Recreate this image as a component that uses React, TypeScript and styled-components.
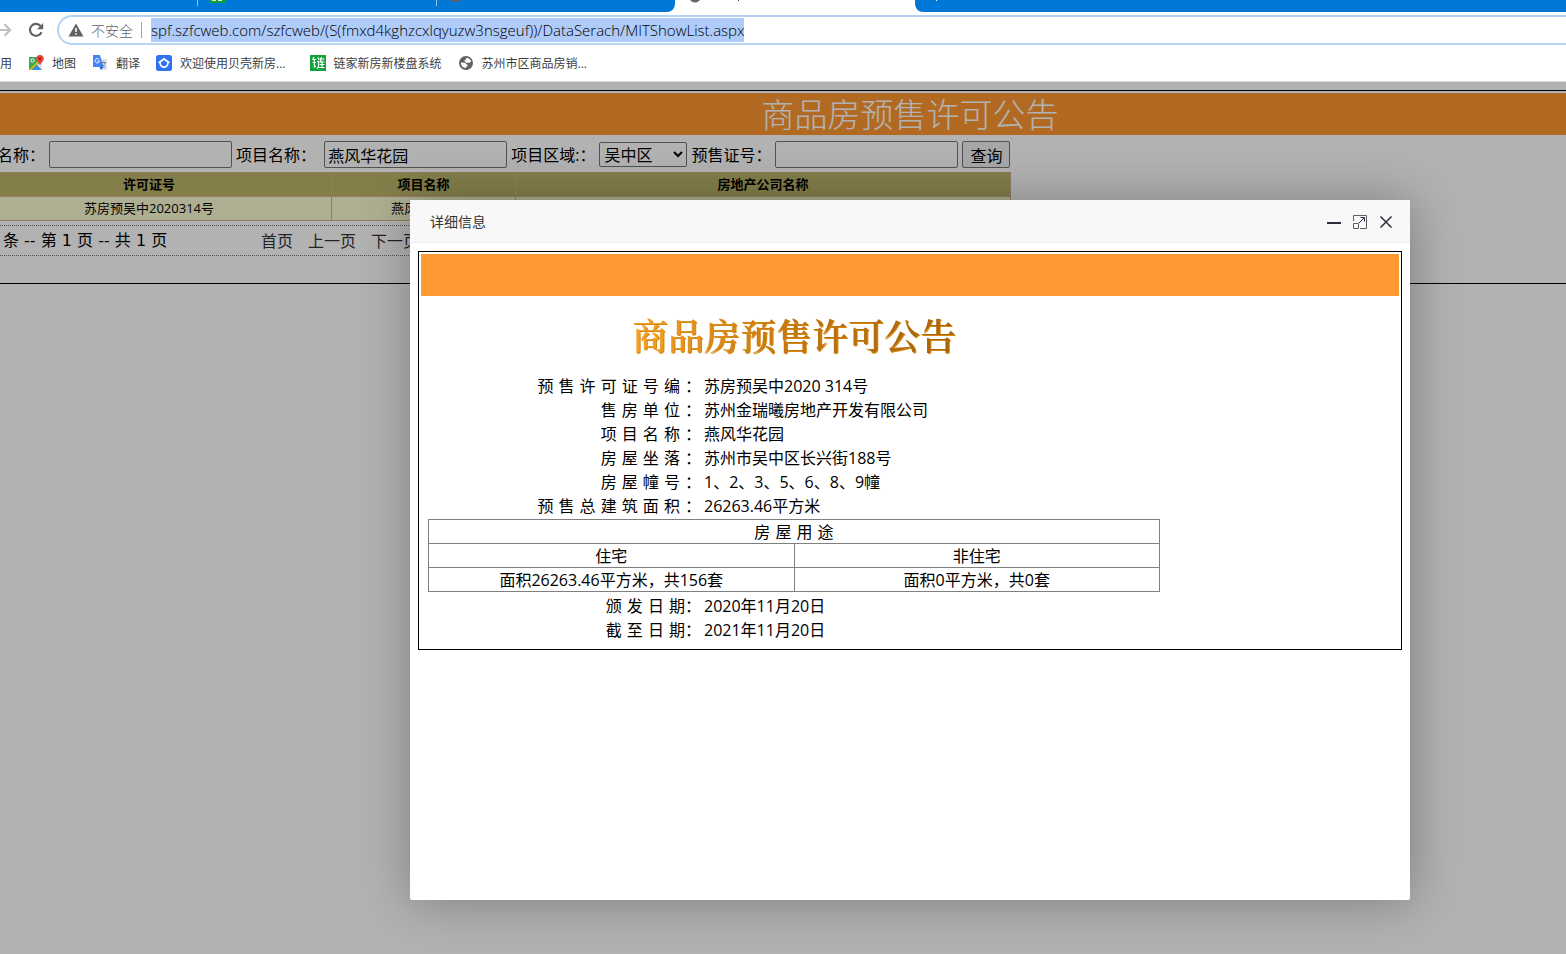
import React from "react";
import styled, { createGlobalStyle } from "styled-components";

const ui = `"Open Sans", "Noto Sans CJK SC", sans-serif`;
const spaced = `"DejaVu Sans", "Noto Sans CJK SC", sans-serif`;

const Global = createGlobalStyle`
  * { box-sizing: border-box; }
  body { margin: 0; background: #fff; font-family: ${ui}; font-size: 16px; font-weight: 400; color: #000; }
`;

const Screen = styled.div`
  position: relative;
  display: flex;
  flex-direction: column;
  min-height: 100vh;
  overflow: hidden;
`;

/* ---------- browser chrome ---------- */

const TabStrip = styled.div`
  display: flex;
  height: 12px;
  overflow: hidden;
`;
const IdleTabs = styled.div`
  display: flex;
  width: 675px;
  background: #0078d7;
  border-bottom-right-radius: 8px;
`;
const IdleTab = styled.div<{ $w: number }>`
  width: ${(p) => p.$w}px;
  height: 6px;
  padding-left: 11px;
  border-right: 1px solid #8cc4f2;
  &:last-child { border-right: 0; }
`;
const ActiveTab = styled.div`
  width: 240px;
  padding-left: 14px;
`;
const StripRest = styled.div`
  flex: 1;
  padding-left: 18px;
  background: #0078d7;
  border-bottom-left-radius: 8px;
`;
const Svg = styled.svg`
  display: block;
  flex: none;
`;

const Toolbar = styled.div`
  display: flex;
  align-items: center;
  height: 36px;
  gap: 12px;
`;
const IconButton = styled.button`
  display: flex;
  padding: 0;
  border: 0;
  background: none;
`;
const Omnibox = styled.div`
  display: flex;
  flex: 1;
  align-items: center;
  height: 30px;
  margin-right: -20px;
  padding-left: 9px;
  border: 2px solid #b3d4f5;
  border-radius: 15px;
`;
const Insecure = styled.span`
  margin: 0 8px 0 7px;
  font-size: 14px;
  font-weight: 300;
  color: #5f6368;
`;
const Divider = styled.span`
  width: 1px;
  height: 16px;
  margin-right: 9px;
  background: #9aa0a6;
`;
const Url = styled.input`
  field-sizing: content;
  height: 24px;
  padding: 0;
  border: 0;
  outline: 0;
  background: #aecbfa;
  font: 300 15px ${ui};
  color: #000;
`;
const Bookmarks = styled.nav`
  display: flex;
  align-items: center;
  height: 34px;
  padding-bottom: 4px;
  gap: 16px;
  border-bottom: 1px solid #dadce0;
`;
const Bookmark = styled.a<{ $gap?: number }>`
  display: flex;
  align-items: center;
  gap: 8px;
  margin-right: ${(p) => p.$gap ?? 0}px;
  font-size: 12px;
  color: #3c4043;
  text-decoration: none;
  white-space: nowrap;
`;

/* ---------- announcement list ---------- */

const Page = styled.main`
  position: relative;
  flex: 1;
  padding-top: 8px;
`;
const Shade = styled.div`
  position: absolute;
  inset: 0;
  background: rgba(0, 0, 0, 0.3);
`;
const Frame = styled.section`
  padding: 2px 0 27px;
  border: solid #000;
  border-width: 1px 0;
`;
const Banner = styled.h1`
  height: 42px;
  margin: 0;
  padding-left: 254px;
  background: #ff9933;
  color: #fff;
  font-size: 33px;
  font-weight: 300;
  line-height: 44px;
  text-align: center;
`;
const Search = styled.form`
  display: flex;
  align-items: center;
  height: 37px;
  margin-left: -3px;
  padding-top: 2px;
  gap: 4px;
  line-height: 24px;
  white-space: pre;
`;
const Field = styled.input`
  width: 183px;
  height: 27px;
  padding: 1px 3px;
  border: 1px solid #767676;
  border-radius: 2px;
  background: #fff;
  font: 400 16px ${ui};
`;
const Area = styled.select`
  width: 88px;
  height: 25px;
  border: 1px solid #767676;
  border-radius: 2px;
  background: #fff;
  font: 400 16px ${ui};
  color: #000;
`;
const Submit = styled.button`
  width: 48px;
  height: 27px;
  padding: 0;
  border: 1px solid #767676;
  border-radius: 2px;
  background: #efefef;
  font: 400 16px ${ui};
`;
const Results = styled.table`
  width: 1045px;
  margin-left: -34px;
  border-collapse: collapse;
  table-layout: fixed;
  font-size: 13px;
  line-height: 23px;
  text-align: center;
  th, td { height: 24px; padding: 0; border: 1px solid #d2b48c; }
  th { background: #bdb76b; font-weight: 700; }
  td { background: #fafad2; }
`;
const Pager = styled.div`
  display: flex;
  width: 1011px;
  height: 31px;
  margin-top: 4px;
  padding-left: 3px;
  border: dotted #767676;
  border-width: 1px 0;
  line-height: 30px;
`;
const Count = styled.span`
  width: 258px;
  font-family: ${spaced};
`;
const PageLink = styled.a`
  margin-right: 15px;
  color: #333;
  text-decoration: none;
`;

/* ---------- detail window ---------- */

const Dialog = styled.div`
  position: absolute;
  top: 200px;
  left: 410px;
  width: 1000px;
  height: 700px;
  border-radius: 2px;
  background: #fff;
  box-shadow: 1px 1px 50px rgba(0, 0, 0, 0.3);
`;
const DialogBar = styled.header`
  display: flex;
  align-items: center;
  height: 43px;
  padding: 2px 16px 0 20px;
  gap: 10px;
  border-bottom: 1px solid #eee;
  background: #f8f8f8;
`;
const DialogTitle = styled.h2`
  flex: 1;
  margin: 0;
  font-size: 14px;
  font-weight: 400;
  line-height: 20px;
  color: #333;
`;
const Notice = styled.article`
  margin: 8px;
  padding: 2px 2px 7px;
  border: 1px solid #000;
`;
const NoticeBand = styled.div`
  height: 42px;
  background: #ff9933;
`;
const NoticeBody = styled.div`
  width: 732px;
  margin-left: 7px;
`;
const NoticeTitle = styled.h3`
  height: 78px;
  margin: 0;
  background: linear-gradient(100deg, #ffab2b 25%, #c47a12 48%, #a8650b 70%);
  background-clip: text;
  color: transparent;
  filter: drop-shadow(1px 1px 0 #d9860f);
  font: 600 36px/78px "Noto Serif CJK SC", "Noto Sans CJK SC", serif;
  text-align: center;
`;
const Facts = styled.dl`
  display: grid;
  grid-template-columns: 273px 1fr;
  grid-auto-rows: 24px;
  align-items: baseline;
  column-gap: 3px;
  margin: 0;
  line-height: 24px;
`;
const FactName = styled.dt`
  font-family: ${spaced};
  text-align: right;
`;
const FactValue = styled.dd`
  margin: 0;
  white-space: nowrap;
`;
const Usage = styled.table`
  width: 732px;
  margin: 1px 0 2px;
  border-collapse: collapse;
  table-layout: fixed;
  line-height: 21px;
  text-align: center;
  th, td { height: 24px; padding: 2px 0 0; border: 1px solid #808080; font-weight: 400; }
  th { font-family: ${spaced}; }
`;

const facts: [string, string][] = [
  ["预 售 许 可 证 号 编 ：", "苏房预吴中2020 314号"],
  ["售 房 单 位 ：", "苏州金瑞曦房地产开发有限公司"],
  ["项 目 名 称 ：", "燕风华花园"],
  ["房 屋 坐 落 ：", "苏州市吴中区长兴街188号"],
  ["房 屋 幢 号 ：", "1、2、3、5、6、8、9幢"],
  ["预 售 总 建 筑 面 积 ：", "26263.46平方米"],
];
const dates: [string, string][] = [
  ["颁 发 日 期：", "2020年11月20日"],
  ["截 至 日 期：", "2021年11月20日"],
];

const FactList = ({ items }: { items: [string, string][] }) => (
  <Facts>
    {items.map(([name, value]) => (
      <React.Fragment key={name}>
        <FactName>{name}</FactName>
        <FactValue>{value}</FactValue>
      </React.Fragment>
    ))}
  </Facts>
);

const Globe = () => (
  <Svg width="16" height="16" viewBox="0 0 16 16">
    <circle cx="8" cy="8" r="7" fill="#5f6368" />
    <path d="M8 3.2c2.6-.6 4.9 1.400 5.100 3.600-1 .2-1.300 1.200-2.400 1H8.500c-.9-.1-.6-1.300-1.500-1.400-1-.2-.6-1.400.2-1.500.9 0 .3-1.200.8-1.700zM2.900 7.600l4 .1c1.300.2 1.300 1.900 2.500 2 .9.300.3 1.400-.6 1.500-.7.200-.3 1.400-.9 1.900C5 13 2.800 10.800 2.900 7.600z" fill="#fff" />
  </Svg>
);

export default function App() {
  return (
    <Screen>
      <Global />
      <TabStrip>
        <IdleTabs>
          <IdleTab $w={198} />
          <IdleTab $w={239}>
            <Svg width="16" height="3"><path d="M0 0h16v3H0z" fill="#12a03c" /><path d="M3 0h4v1H3zM9 0h4v1H9z" fill="#d6f0dc" /></Svg>
          </IdleTab>
          <IdleTab $w={238}>
            <Svg width="16" height="2"><path d="M2 0h12q-6 4-12 0z" fill="#5f6368" /></Svg>
          </IdleTab>
        </IdleTabs>
        <ActiveTab>
          <Svg width="60" height="3"><path d="M1 0h10q-5 5-10 0z" fill="#5f6368" /><path d="M49 0h1v1h-1z" fill="#444" /></Svg>
        </ActiveTab>
        <StripRest>
          <Svg width="8" height="2"><path d="M3 0h1v1H3z" fill="#fff" /></Svg>
        </StripRest>
      </TabStrip>

      <Toolbar>
        <IconButton aria-label="前进">
          <Svg width="13" height="16" viewBox="0 0 13 16" fill="none" stroke="#bdbfc2" strokeWidth="2"><path d="M0 8h10M4.500 2.200 10.300 8l-5.800 5.800" /></Svg>
        </IconButton>
        <IconButton aria-label="重新加载">
          <Svg width="20" height="20" viewBox="0 0 20 20"><path d="M16.500 12.200A6 6 0 1 1 15.600 6" fill="none" stroke="#5f6368" strokeWidth="2.200" /><path d="M18.200 3v6.200H12z" fill="#5f6368" /></Svg>
        </IconButton>
        <Omnibox>
          <Svg width="16" height="16" viewBox="0 0 16 16"><path d="M8 1.500 15.500 14.500H.5z" fill="#5f6368" /><path d="M7.200 6h1.600v4H7.200zM7.200 11.200h1.600v1.600H7.200z" fill="#fff" /></Svg>
          <Insecure>不安全</Insecure>
          <Divider />
          <Url aria-label="地址" defaultValue="spf.szfcweb.com/szfcweb/(S(fmxd4kghzcxlqyuzw3nsgeuf))/DataSerach/MITShowList.aspx" />
        </Omnibox>
      </Toolbar>

      <Bookmarks>
        <Bookmark href="#">用</Bookmark>
        <Bookmark href="#">
          <Svg width="16" height="16" viewBox="0 0 16 16">
            <path d="M1 2h13v13H1z" fill="#34a853" /><path d="M1 15 14 2v2L3 15z" fill="#fbbc04" /><path d="M4 15l5-5 5 5z" fill="#4285f4" /><path d="M9 10l5-5v10z" fill="#e2e5e9" />
            <circle cx="4.500" cy="5.500" r="1.700" fill="none" stroke="#fff" />
            <path d="M12 0c2.200 0 3.800 1.600 3.800 3.700 0 2.600-3 3.600-3.800 7-.8-3.400-3.800-4.400-3.800-7C8.200 1.600 9.800 0 12 0z" fill="#ea4335" /><circle cx="12" cy="3.800" r="1.300" fill="#8c1d12" />
          </Svg>
          地图
        </Bookmark>
        <Bookmark href="#">
          <Svg width="16" height="16" viewBox="0 0 16 16">
            <path d="M6 4h9v11H9z" fill="#dfe2e6" /><path d="M9 7.500h5M11.500 6.500v1.500M13 8c-.5 2-2 3.500-3.500 4M10 8.500c.7 1.700 2 3 3.500 3.700" stroke="#6f7f95" fill="none" />
            <path d="M1 0h7l3.500 12H1z" fill="#4285f4" /><path d="M7.500 12h4L9 15z" fill="#2a56c6" />
            <path d="M7 4.300A2.200 2.200 0 1 0 7.500 6H5.500" stroke="#fff" fill="none" />
          </Svg>
          翻译
        </Bookmark>
        <Bookmark href="#" $gap={8}>
          <Svg width="16" height="16" viewBox="0 0 16 16"><rect width="16" height="16" rx="2.500" fill="#3072f6" /><path d="M8 2.800 14 7.300 12.600 8.500C12.300 11.300 10.500 13 8 13s-4.300-1.700-4.600-4.500L2 7.300z" fill="#fff" /><path d="M8 5l3.300 2.500C11.200 9.800 10 11.200 8 11.200S4.800 9.800 4.700 7.500z" fill="#3072f6" /></Svg>
          欢迎使用贝壳新房...
        </Bookmark>
        <Bookmark href="#">
          <Svg width="16" height="16" viewBox="0 0 16 16"><path d="M0 0h16v16H0z" fill="#12a03c" /><path d="M4 2 2.500 5M3 4.500h3M2.500 7.500H6M4.300 4.500V12L6 11M7.500 3h1v2M7 6.500h1.500V12L7 13.500M8.500 12.500h6M9.500 4h5M11.500 2 10 7h4.500M9.500 9.500h5M12 5.500V12" fill="none" stroke="#fff" strokeWidth="1.100" /></Svg>
          链家新房新楼盘系统
        </Bookmark>
        <Bookmark href="#"><Globe />苏州市区商品房销...</Bookmark>
      </Bookmarks>

      <Page>
        <Frame>
          <Banner>商品房预售许可公告</Banner>
          <Search onSubmit={(e) => e.preventDefault()}>
            <label htmlFor="company">名称：</label>
            <Field id="company" />
            <label htmlFor="project">{"项目名称： "}</label>
            <Field id="project" defaultValue="燕风华花园" />
            <label htmlFor="area">项目区域:：</label>
            <Area id="area"><option>吴中区</option></Area>
            <label htmlFor="permit">预售证号：</label>
            <Field id="permit" />
            <Submit>查询</Submit>
          </Search>
          <Results>
            <colgroup><col width="365" /><col width="184" /><col /></colgroup>
            <thead><tr><th>许可证号</th><th>项目名称</th><th>房地产公司名称</th></tr></thead>
            <tbody><tr><td>苏房预吴中2020314号</td><td>燕风华花园</td><td /></tr></tbody>
          </Results>
          <Pager>
            <Count>条 -- 第 1 页 -- 共 1 页</Count>
            <PageLink href="#">首页</PageLink>
            <PageLink href="#">上一页</PageLink>
            <PageLink href="#">下一页</PageLink>
          </Pager>
        </Frame>
        <Shade />
      </Page>

      <Dialog role="dialog" aria-labelledby="detail-title">
        <DialogBar>
          <DialogTitle id="detail-title">详细信息</DialogTitle>
          <IconButton aria-label="最小化"><Svg width="16" height="16"><path d="M1 8h14v2H1z" fill="#2e2d3c" /></Svg></IconButton>
          <IconButton aria-label="最大化">
            <Svg width="16" height="16" viewBox="0 0 16 16" fill="none" stroke="#5b5a69"><path d="M1.500 7V1.500h13v13H8M1.500 9.500h5v5h-5z" /><path d="M7 9l5-5M8.500 3.500h4v4" stroke="#2e2d3c" /></Svg>
          </IconButton>
          <IconButton aria-label="关闭"><Svg width="16" height="16" fill="none" stroke="#2e2d3c" strokeWidth="1.500"><path d="M2.500 2.500l11 11M13.500 2.500l-11 11" /></Svg></IconButton>
        </DialogBar>
        <Notice>
          <NoticeBand />
          <NoticeBody>
            <NoticeTitle>商品房预售许可公告</NoticeTitle>
            <FactList items={facts} />
            <Usage>
              <thead>
                <tr><th colSpan={2}>房 屋 用 途</th></tr>
                <tr><th>住宅</th><th>非住宅</th></tr>
              </thead>
              <tbody><tr><td>面积26263.46平方米，共156套</td><td>面积0平方米，共0套</td></tr></tbody>
            </Usage>
            <FactList items={dates} />
          </NoticeBody>
        </Notice>
      </Dialog>
    </Screen>
  );
}
